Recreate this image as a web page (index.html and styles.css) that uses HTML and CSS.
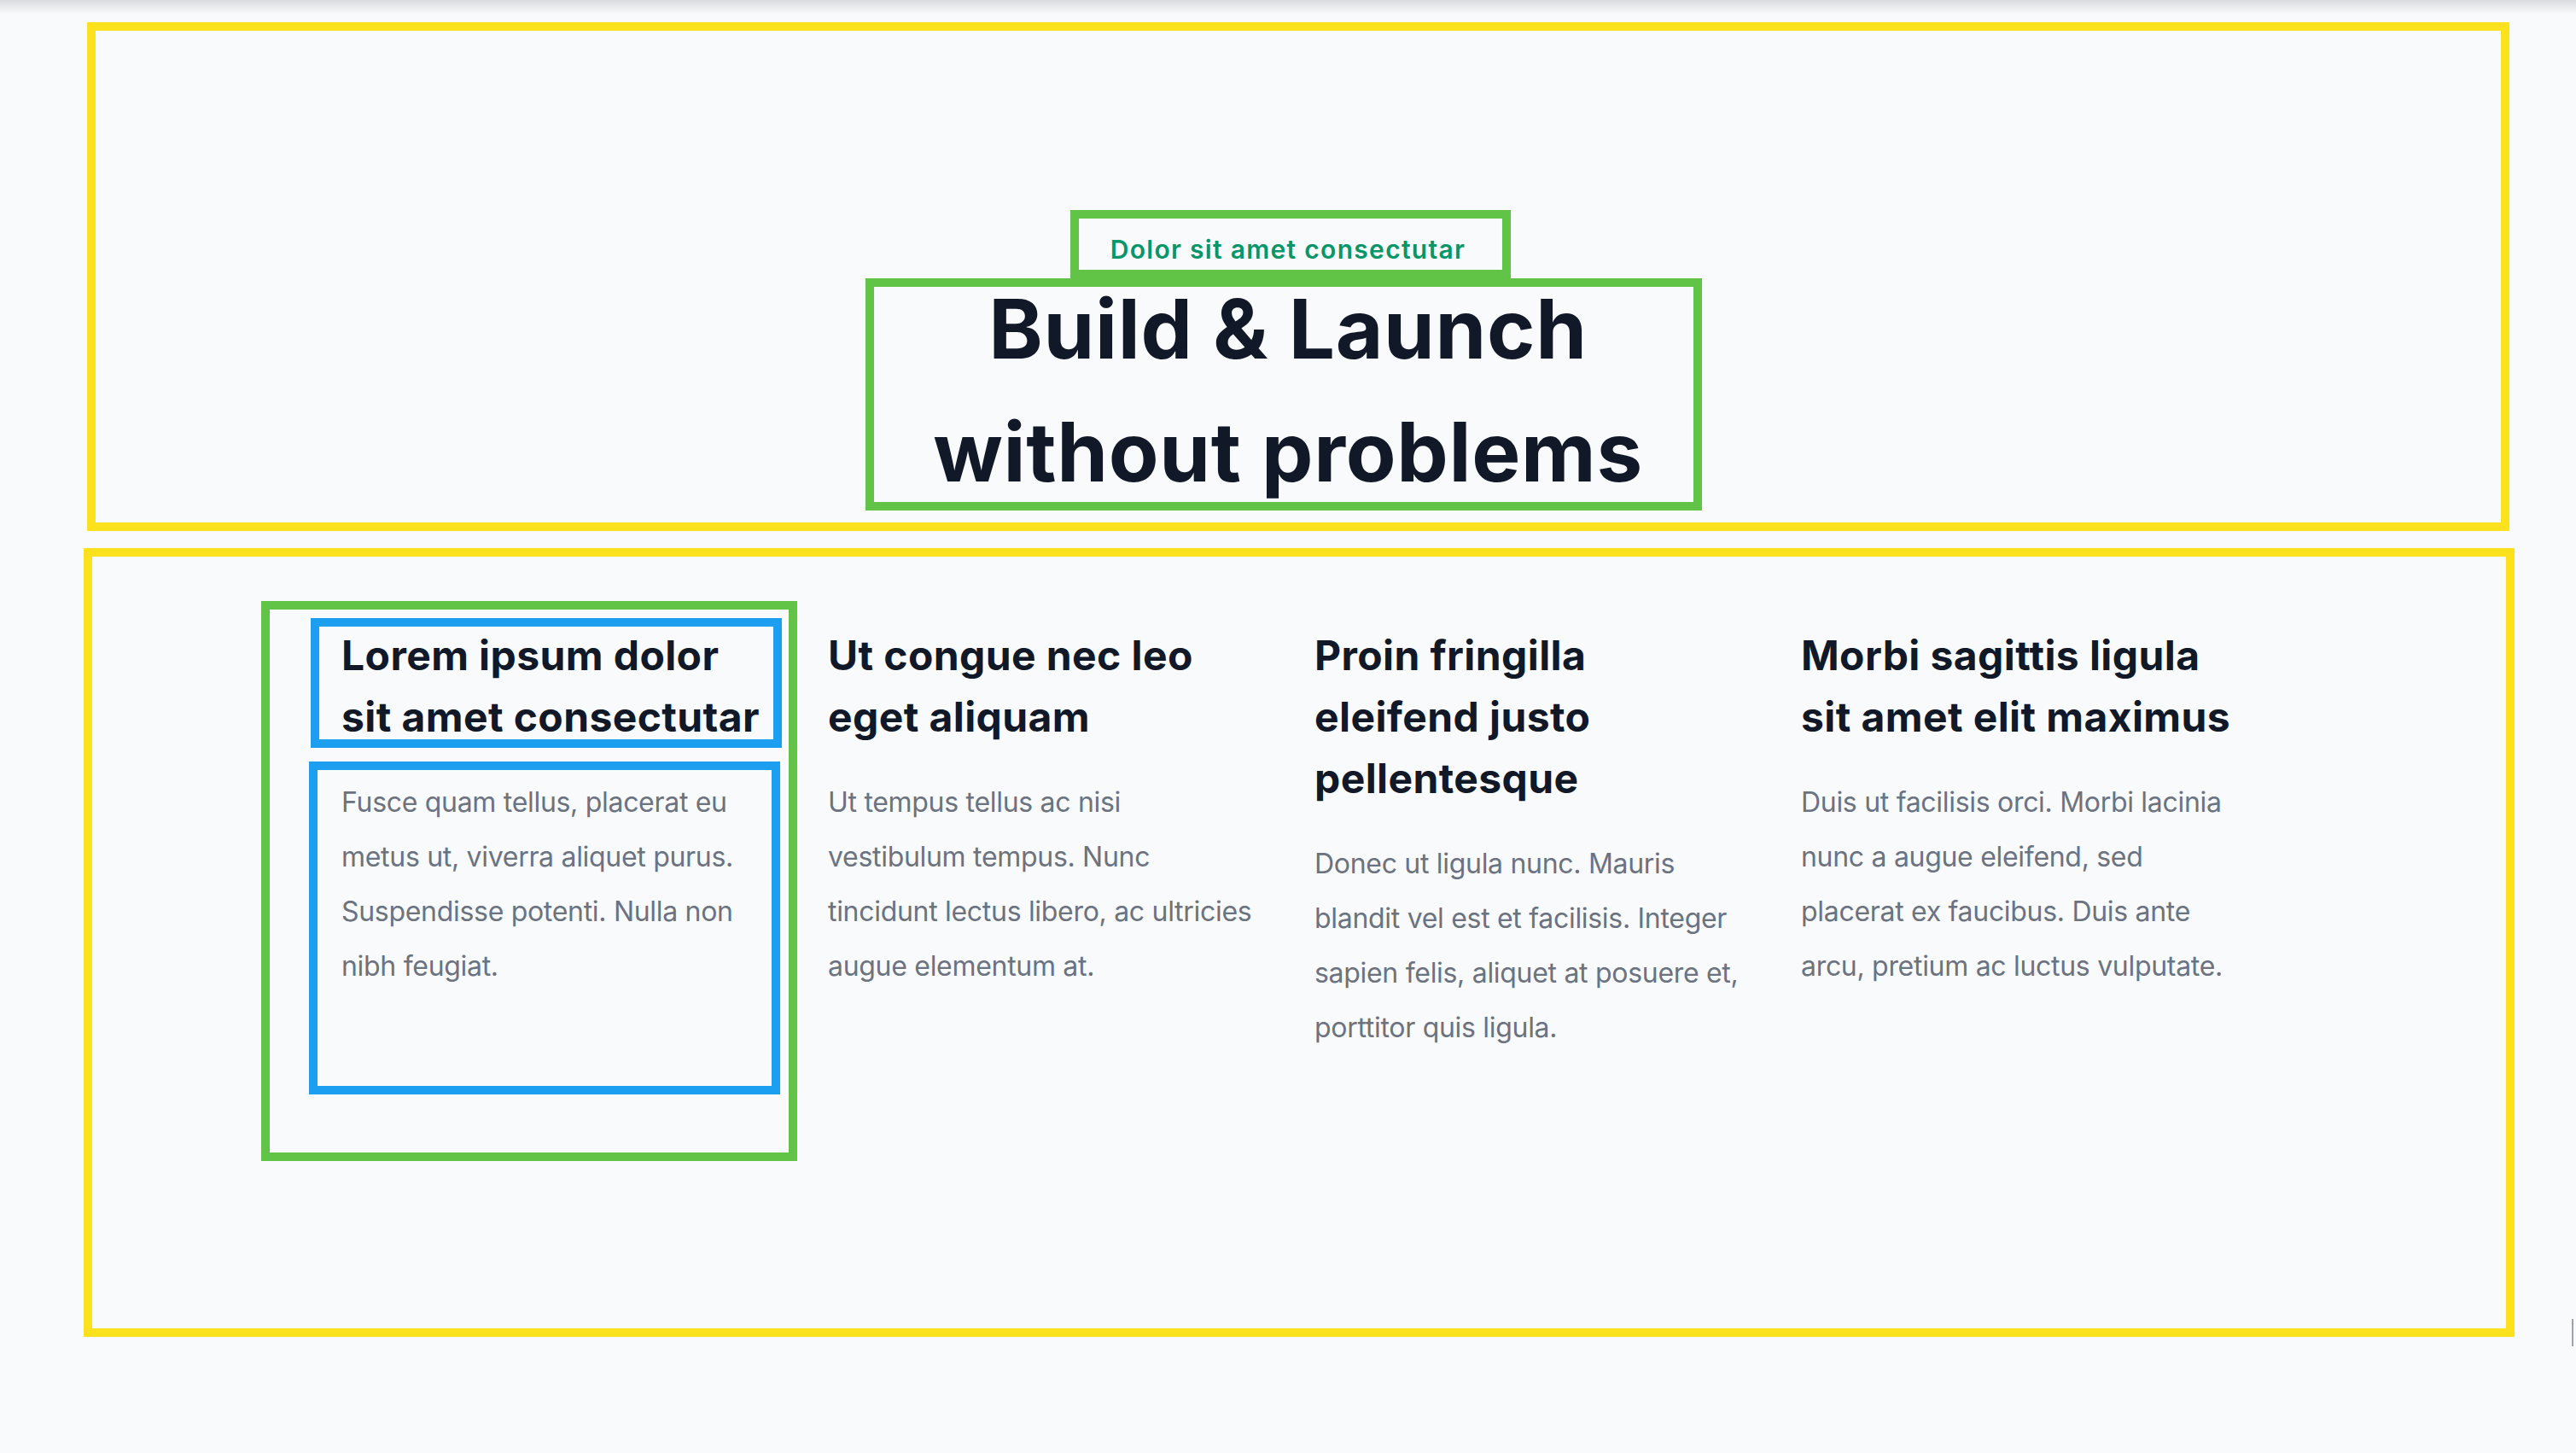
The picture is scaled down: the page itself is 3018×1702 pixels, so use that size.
FILE: index.html
```html
<!DOCTYPE html>
<html lang="en">
<head>
<meta charset="utf-8">
<title>Build &amp; Launch without problems</title>
<link rel="stylesheet" href="styles.css">
</head>
<body>
  <header class="hero">
    <p class="eyebrow">Dolor sit amet consectutar</p>
    <h1 class="hero-title">Build &amp; Launch<br>without problems</h1>
  </header>

  <section class="features">
    <div class="feature-grid">
      <article class="feature feature-marked">
        <h3 class="feature-title">Lorem ipsum dolor sit amet consectutar</h3>
        <p class="feature-text">Fusce quam tellus, placerat eu metus ut, viverra aliquet purus. Suspendisse potenti. Nulla non nibh feugiat.</p>
      </article>
      <article class="feature">
        <h3 class="feature-title">Ut congue nec leo eget aliquam</h3>
        <p class="feature-text">Ut tempus tellus ac nisi vestibulum tempus. Nunc tincidunt lectus libero, ac ultricies augue elementum at.</p>
      </article>
      <article class="feature">
        <h3 class="feature-title">Proin fringilla eleifend justo pellentesque</h3>
        <p class="feature-text">Donec ut ligula nunc. Mauris blandit vel est et facilisis. Integer sapien felis, aliquet at posuere et, porttitor quis ligula.</p>
      </article>
      <article class="feature">
        <h3 class="feature-title">Morbi sagittis ligula sit amet elit maximus</h3>
        <p class="feature-text">Duis ut facilisis orci. Morbi lacinia nunc a augue eleifend, sed placerat ex faucibus. Duis ante arcu, pretium ac luctus vulputate.</p>
      </article>
    </div>
  </section>

  <span class="edge-mark"></span>
</body>
</html>
```

FILE: styles.css
```css
html {
  background: #f8fafc;
}

body {
  margin: 0;
  min-height: 1702px;
  position: relative;
  font-family: Inter, "Noto Sans", "Liberation Sans", sans-serif;
  background: linear-gradient(#dadbde, #f8fafc 17px) no-repeat, #f8fafc;
}

/* ---------- hero ---------- */
.hero {
  box-sizing: border-box;
  height: 596px;
  margin: 26px 78px 0 102px;
  padding: 0 24px 11px 0;
  border: 10px solid #fde11d;
  display: flex;
  flex-direction: column;
  justify-content: flex-end;
  align-items: center;
}

.eyebrow {
  position: relative;
  margin: 0 0 1px;
  font-size: 30px;
  line-height: 40px;
  font-weight: 600;
  letter-spacing: 1.3px;
  color: #079669;
}

.eyebrow::before {
  content: "";
  position: absolute;
  box-sizing: border-box;
  left: calc(50% - 255px);
  top: -26px;
  width: 516px;
  height: 80px;
  border: 10px solid #62c446;
}

.hero-title {
  position: relative;
  margin: 0;
  font-size: 96px;
  line-height: 144px;
  font-weight: 700;
  letter-spacing: 0.7px;
  text-align: center;
  color: #111827;
}

.hero-title::before {
  content: "";
  position: absolute;
  box-sizing: border-box;
  left: calc(50% - 495px);
  top: 13px;
  width: 980px;
  height: 272px;
  border: 10px solid #62c446;
}

/* ---------- features ---------- */
.features {
  box-sizing: border-box;
  height: 924px;
  margin: 20px 72px 0 98px;
  padding: 80px 28px 0 0;
  border: 10px solid #fde11d;
  display: flex;
  justify-content: center;
  align-items: flex-start;
}

.feature-grid {
  display: grid;
  grid-template-columns: repeat(4, 506px);
  column-gap: 64px;
}

.feature {
  position: relative;
}

.feature-title {
  position: relative;
  margin: 0 0 32px;
  font-size: 48px;
  line-height: 72px;
  font-weight: 700;
  letter-spacing: 0.4px;
  color: #111827;
}

.feature-text {
  position: relative;
  margin: 0;
  font-size: 32px;
  line-height: 64px;
  font-weight: 400;
  letter-spacing: -0.3px;
  color: #6b7280;
}

.feature-marked::before {
  content: "";
  position: absolute;
  box-sizing: border-box;
  left: -94px;
  top: -28px;
  width: 628px;
  height: 656px;
  border: 10px solid #62c446;
}

.feature-marked .feature-title::before,
.feature-marked .feature-text::before {
  content: "";
  position: absolute;
  box-sizing: border-box;
  border: 10px solid #1c9ff1;
}

.feature-marked .feature-title::before {
  left: -36px;
  top: -8px;
  width: 552px;
  height: 152px;
}

.feature-marked .feature-text::before {
  left: -38px;
  top: -16px;
  width: 552px;
  height: 390px;
}

.edge-mark {
  position: absolute;
  left: 3013px;
  top: 1545px;
  width: 2px;
  height: 32px;
  background: #9ca3af;
}
```
